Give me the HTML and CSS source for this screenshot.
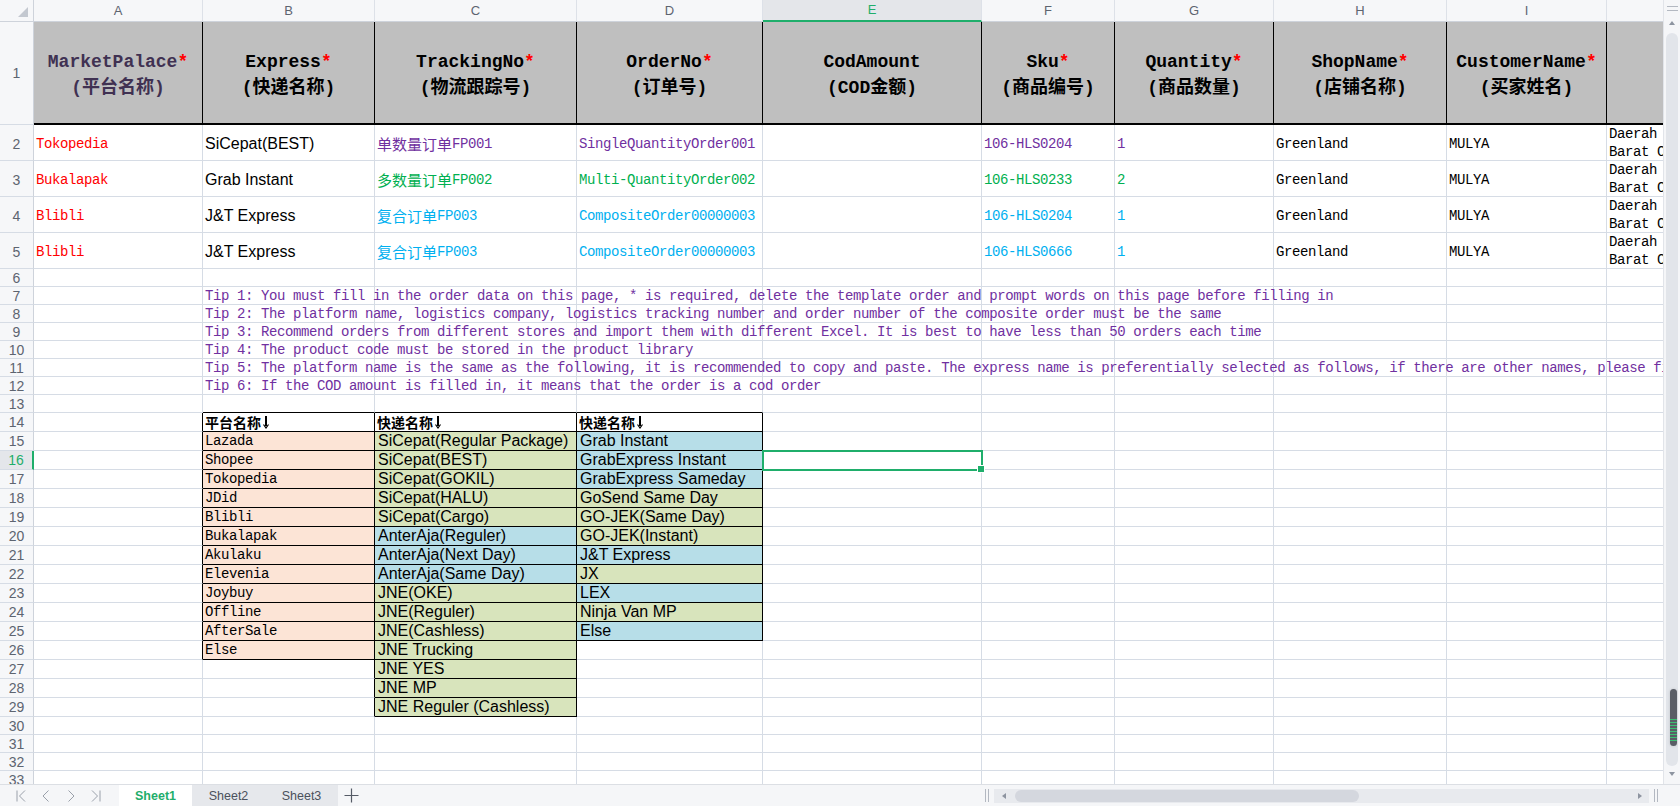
FILE: index.html
```html
<!DOCTYPE html>
<html lang="zh">
<head>
<meta charset="utf-8">
<title>Order import template</title>
<link rel="stylesheet" href="styles.css">
</head>
<body>
<div class="app">
  <div class="main">
    <div class="sheet">
      <div class="row colhdr">
        <div class="corner"><svg width="34" height="22" viewBox="0 0 34 22"><polygon points="28,7 28,17 18,17" fill="#C3C8D0"/></svg></div>
        <div>A</div><div>B</div><div>C</div><div>D</div><div class="on">E</div><div>F</div><div>G</div><div>H</div><div>I</div><div></div>
      </div>

      <div class="row r1">
        <div class="rh">1</div>
        <div class="th pd"><span>MarketPalace<em>*</em></span><span>(平台名称)</span></div>
        <div class="th"><span>Express<em>*</em></span><span>(快递名称)</span></div>
        <div class="th"><span>TrackingNo<em>*</em></span><span>(物流跟踪号)</span></div>
        <div class="th"><span>OrderNo<em>*</em></span><span>(订单号)</span></div>
        <div class="th"><span>CodAmount</span><span>(COD金额)</span></div>
        <div class="th"><span>Sku<em>*</em></span><span>(商品编号)</span></div>
        <div class="th"><span>Quantity<em>*</em></span><span>(商品数量)</span></div>
        <div class="th"><span>ShopName<em>*</em></span><span>(店铺名称)</span></div>
        <div class="th"><span>CustomerName<em>*</em></span><span>(买家姓名)</span></div>
        <div class="th"></div>
      </div>

      <div class="row r36">
        <div class="rh">2</div>
        <div class="red">Tokopedia</div>
        <div class="s">SiCepat(BEST)</div>
        <div class="pu"><span class="cj">单数量订单</span>FP001</div>
        <div class="pu">SingleQuantityOrder001</div>
        <div></div>
        <div class="pu">106-HLS0204</div>
        <div class="pu">1</div>
        <div>Greenland</div>
        <div>MULYA</div>
        <div class="wrap"><span>Daerah Khusus Ibukota Jakarta, Jakarta</span><span>Barat Cengkareng</span></div>
      </div>
      <div class="row r36">
        <div class="rh">3</div>
        <div class="red">Bukalapak</div>
        <div class="s">Grab Instant</div>
        <div class="gn"><span class="cj">多数量订单</span>FP002</div>
        <div class="gn">Multi-QuantityOrder002</div>
        <div></div>
        <div class="gn">106-HLS0233</div>
        <div class="gn">2</div>
        <div>Greenland</div>
        <div>MULYA</div>
        <div class="wrap"><span>Daerah Khusus Ibukota Jakarta, Jakarta</span><span>Barat Cengkareng</span></div>
      </div>
      <div class="row r36">
        <div class="rh">4</div>
        <div class="red">Blibli</div>
        <div class="s">J&amp;T Express</div>
        <div class="cy"><span class="cj">复合订单</span>FP003</div>
        <div class="cy">CompositeOrder00000003</div>
        <div></div>
        <div class="cy">106-HLS0204</div>
        <div class="cy">1</div>
        <div>Greenland</div>
        <div>MULYA</div>
        <div class="wrap"><span>Daerah Khusus Ibukota Jakarta, Jakarta</span><span>Barat Cengkareng</span></div>
      </div>
      <div class="row r36">
        <div class="rh">5</div>
        <div class="red">Blibli</div>
        <div class="s">J&amp;T Express</div>
        <div class="cy"><span class="cj">复合订单</span>FP003</div>
        <div class="cy">CompositeOrder00000003</div>
        <div></div>
        <div class="cy">106-HLS0666</div>
        <div class="cy">1</div>
        <div>Greenland</div>
        <div>MULYA</div>
        <div class="wrap"><span>Daerah Khusus Ibukota Jakarta, Jakarta</span><span>Barat Cengkareng</span></div>
      </div>

      <div class="row r18"><div class="rh">6</div><div></div><div></div><div></div><div></div><div></div><div></div><div></div><div></div><div></div><div></div></div>
      <div class="row r18"><div class="rh">7</div><div></div><div class="tip">Tip 1: You must fill in the order data on this page, * is required, delete the template order and prompt words on this page before filling in</div><div></div><div></div><div></div><div></div><div></div><div></div><div></div><div></div></div>
      <div class="row r18"><div class="rh">8</div><div></div><div class="tip">Tip 2: The platform name, logistics company, logistics tracking number and order number of the composite order must be the same</div><div></div><div></div><div></div><div></div><div></div><div></div><div></div><div></div></div>
      <div class="row r18"><div class="rh">9</div><div></div><div class="tip">Tip 3: Recommend orders from different stores and import them with different Excel. It is best to have less than 50 orders each time</div><div></div><div></div><div></div><div></div><div></div><div></div><div></div><div></div></div>
      <div class="row r18"><div class="rh">10</div><div></div><div class="tip">Tip 4: The product code must be stored in the product library</div><div></div><div></div><div></div><div></div><div></div><div></div><div></div><div></div></div>
      <div class="row r18"><div class="rh">11</div><div></div><div class="tip">Tip 5: The platform name is the same as the following, it is recommended to copy and paste. The express name is preferentially selected as follows, if there are other names, please fill in</div><div></div><div></div><div></div><div></div><div></div><div></div><div></div><div></div></div>
      <div class="row r18"><div class="rh">12</div><div></div><div class="tip">Tip 6: If the COD amount is filled in, it means that the order is a cod order</div><div></div><div></div><div></div><div></div><div></div><div></div><div></div><div></div></div>
      <div class="row r18"><div class="rh">13</div><div></div><div class="kb"></div><div class="kb"></div><div class="kb"></div><div></div><div></div><div></div><div></div><div></div><div></div></div>

      <div class="row r19"><div class="rh">14</div><div class="kr"></div>
        <div class="tb k">平台名称<svg class="arr" viewBox="0 0 8 14" width="8" height="14"><path d="M4 1v10" stroke="#000" stroke-width="2"/><path d="M1.5 9.5 4 13 6.5 9.5" fill="none" stroke="#000" stroke-width="1.2"/></svg></div>
        <div class="tb k">快递名称<svg class="arr" viewBox="0 0 8 14" width="8" height="14"><path d="M4 1v10" stroke="#000" stroke-width="2"/><path d="M1.5 9.5 4 13 6.5 9.5" fill="none" stroke="#000" stroke-width="1.2"/></svg></div>
        <div class="tb k">快递名称<svg class="arr" viewBox="0 0 8 14" width="8" height="14"><path d="M4 1v10" stroke="#000" stroke-width="2"/><path d="M1.5 9.5 4 13 6.5 9.5" fill="none" stroke="#000" stroke-width="1.2"/></svg></div>
        <div></div><div></div><div></div><div></div><div></div><div></div></div>
      <div class="row r19"><div class="rh">15</div><div class="kr"></div><div class="pe k">Lazada</div><div class="gr k s">SiCepat(Regular Package)</div><div class="bl k s">Grab Instant</div><div></div><div></div><div></div><div></div><div></div><div></div></div>
      <div class="row r19"><div class="rh on">16</div><div class="kr"></div><div class="pe k">Shopee</div><div class="gr k s">SiCepat(BEST)</div><div class="bl k s">GrabExpress Instant</div><div></div><div></div><div></div><div></div><div></div><div></div></div>
      <div class="row r19"><div class="rh">17</div><div class="kr"></div><div class="pe k">Tokopedia</div><div class="gr k s">SiCepat(GOKIL)</div><div class="bl k s">GrabExpress Sameday</div><div></div><div></div><div></div><div></div><div></div><div></div></div>
      <div class="row r19"><div class="rh">18</div><div class="kr"></div><div class="pe k">JDid</div><div class="gr k s">SiCepat(HALU)</div><div class="gr k s">GoSend Same Day</div><div></div><div></div><div></div><div></div><div></div><div></div></div>
      <div class="row r19"><div class="rh">19</div><div class="kr"></div><div class="pe k">Blibli</div><div class="gr k s">SiCepat(Cargo)</div><div class="gr k s">GO-JEK(Same Day)</div><div></div><div></div><div></div><div></div><div></div><div></div></div>
      <div class="row r19"><div class="rh">20</div><div class="kr"></div><div class="pe k">Bukalapak</div><div class="bl k s">AnterAja(Reguler)</div><div class="gr k s">GO-JEK(Instant)</div><div></div><div></div><div></div><div></div><div></div><div></div></div>
      <div class="row r19"><div class="rh">21</div><div class="kr"></div><div class="pe k">Akulaku</div><div class="bl k s">AnterAja(Next Day)</div><div class="bl k s">J&amp;T Express</div><div></div><div></div><div></div><div></div><div></div><div></div></div>
      <div class="row r19"><div class="rh">22</div><div class="kr"></div><div class="pe k">Elevenia</div><div class="bl k s">AnterAja(Same Day)</div><div class="gr k s">JX</div><div></div><div></div><div></div><div></div><div></div><div></div></div>
      <div class="row r19"><div class="rh">23</div><div class="kr"></div><div class="pe k">Joybuy</div><div class="gr k s">JNE(OKE)</div><div class="bl k s">LEX</div><div></div><div></div><div></div><div></div><div></div><div></div></div>
      <div class="row r19"><div class="rh">24</div><div class="kr"></div><div class="pe k">Offline</div><div class="gr k s">JNE(Reguler)</div><div class="gr k s">Ninja Van MP</div><div></div><div></div><div></div><div></div><div></div><div></div></div>
      <div class="row r19"><div class="rh">25</div><div class="kr"></div><div class="pe k">AfterSale</div><div class="gr k s">JNE(Cashless)</div><div class="bl k s">Else</div><div></div><div></div><div></div><div></div><div></div><div></div></div>
      <div class="row r19"><div class="rh">26</div><div class="kr"></div><div class="pe k">Else</div><div class="gr k s">JNE Trucking</div><div></div><div></div><div></div><div></div><div></div><div></div><div></div></div>
      <div class="row r19"><div class="rh">27</div><div></div><div class="kr"></div><div class="gr k s">JNE YES</div><div></div><div></div><div></div><div></div><div></div><div></div><div></div></div>
      <div class="row r19"><div class="rh">28</div><div></div><div class="kr"></div><div class="gr k s">JNE MP</div><div></div><div></div><div></div><div></div><div></div><div></div><div></div></div>
      <div class="row r19"><div class="rh">29</div><div></div><div class="kr"></div><div class="gr k s">JNE Reguler (Cashless)</div><div></div><div></div><div></div><div></div><div></div><div></div><div></div></div>

      <div class="row r18"><div class="rh">30</div><div></div><div></div><div></div><div></div><div></div><div></div><div></div><div></div><div></div><div></div></div>
      <div class="row r18"><div class="rh">31</div><div></div><div></div><div></div><div></div><div></div><div></div><div></div><div></div><div></div><div></div></div>
      <div class="row r18"><div class="rh">32</div><div></div><div></div><div></div><div></div><div></div><div></div><div></div><div></div><div></div><div></div></div>
      <div class="row r18"><div class="rh">33</div><div></div><div></div><div></div><div></div><div></div><div></div><div></div><div></div><div></div><div></div></div>

      <div class="selbox"></div>
    </div>

    <div class="vscroll">
      <div class="vgrip"></div>
      <div class="tri-up"></div>
      <div class="vtrack"><div class="vthumb"></div></div>
      <div class="tri-down"></div>
    </div>
  </div>

  <div class="tabbar">
    <div class="nav">
      <svg width="10" height="12" viewBox="0 0 10 12"><path d="M1 0.5v11M9 0.5 3.5 6 9 11.5" fill="none" stroke="#9AA0AA" stroke-width="1"/></svg>
      <svg width="10" height="12" viewBox="0 0 10 12"><path d="M7.5 0.5 2 6 7.5 11.5" fill="none" stroke="#9AA0AA" stroke-width="1"/></svg>
      <svg width="10" height="12" viewBox="0 0 10 12"><path d="M2.5 0.5 8 6 2.5 11.5" fill="none" stroke="#9AA0AA" stroke-width="1"/></svg>
      <svg width="10" height="12" viewBox="0 0 10 12"><path d="M9 0.5v11M1 0.5 6.5 6 1 11.5" fill="none" stroke="#9AA0AA" stroke-width="1"/></svg>
    </div>
    <div class="tab act">Sheet1</div>
    <div class="tab">Sheet2</div>
    <div class="tab">Sheet3</div>
    <div class="add"><svg width="15" height="15" viewBox="0 0 15 15"><path d="M7.5 0.5v14M0.5 7.5h14" stroke="#555B66" stroke-width="1.2"/></svg></div>
    <div class="hs">
      <span class="hgrip"></span>
      <div class="htrack"><span class="tri-l"></span><div class="hthumb"></div><span class="tri-r"></span></div>
      <span class="hgrip"></span>
    </div>
  </div>
</div>
</body>
</html>
```

FILE: styles.css
```css
* { box-sizing: border-box; margin: 0; padding: 0; }
html, body { margin: 0; background: #fff; }
body { width: 1680px; height: 806px; overflow: hidden; font-family: "Liberation Sans", Arial, sans-serif; }

.app { display: flex; flex-direction: column; width: 1680px; height: 806px; }
.main { display: flex; height: 784px; }
.sheet { position: relative; width: 1663px; height: 784px; overflow: hidden; }

.row {
  display: grid;
  grid-template-columns: 34px 169px 172px 202px 186px 219px 133px 159px 173px 160px 220px;
  grid-template-rows: 100%;
}
.row > div {
  display: flex;
  align-items: center;
  min-width: 0;
  white-space: nowrap;
  padding-left: 2px;
  border-right: 1px solid #D6DCE5;
  border-bottom: 1px solid #D6DCE5;
  font: 14px/18px "Liberation Mono", "Noto Sans CJK SC", monospace;
  letter-spacing: -0.4px;
  color: #000;
}
.colhdr { height: 22px; }
.r1 { height: 103px; }
.r36 { height: 36px; }
.r18 { height: 18px; }
.r19 { height: 19px; }
.r36 > div { padding-top: 3px; }
.r36 > div.wrap { padding-top: 0; }

/* headers */
.colhdr > div {
  justify-content: center;
  padding: 0;
  background: #F6F7F9;
  color: #5D6470;
  font: 13px/16px "Liberation Sans", Arial, sans-serif;
  letter-spacing: 0;
  border-right-color: #DDE1E8;
  border-bottom-color: #CED3DB;
}
.colhdr > div.corner { display: block; border-right-color: #CED3DB; }
.corner svg { display: block; }
.colhdr > div.on { background: #E4E6EA; color: #1FAE6B; border-bottom: 2px solid #1FAE6B; }

.row > div.rh {
  justify-content: center;
  padding-left: 0;
  background: #F6F7F9;
  color: #5D6470;
  font: 14px/16px "Liberation Sans", Arial, sans-serif;
  letter-spacing: 0;
  border-right-color: #CED3DB;
}
.row > div.rh.on { background: #E4E6EA; color: #1FAE6B; border-right: 2px solid #1FAE6B; }

/* row 1 titles */
.r1 > div.th {
  flex-direction: column;
  justify-content: center;
  align-items: center;
  padding: 5px 0 0;
  background: #BFBFBF;
  border-right-color: #000;
  border-bottom: 2px solid #000;
  font: bold 18px/26px "Liberation Mono", "Noto Sans CJK SC", monospace;
  letter-spacing: 0;
}
.r1 > div.pd { color: #403152; }
em { font-style: normal; color: #FF0000; }

/* data */
.row > div.s { font: 16px/18px "Liberation Sans", Arial, sans-serif; letter-spacing: 0; }
.row > div.red { color: #FF0000; }
.row > div.pu { color: #7030A0; }
.row > div.gn { color: #00B050; }
.row > div.cy { color: #00B0F0; }
.cj { font-family: "Noto Sans CJK SC", sans-serif; font-size: 15px; letter-spacing: 0; }
.row > div.wrap { flex-direction: column; align-items: flex-start; justify-content: center; overflow: hidden; }

.row > div.tip { color: #7030A0; overflow: visible; position: relative; z-index: 1; }

/* lookup table */
.row > div.kr { border-right-color: #000; }
.row > div.kb { border-bottom-color: #000; }
.row > div.k { border-right-color: #000; border-bottom-color: #000; }
.row > div.tb {
  background: #fff;
  font: bold 14px/18px "Noto Sans CJK SC", sans-serif;
  letter-spacing: 0;
  gap: 1px;
}
.arr { display: block; }
.row > div.pe { background: #FCE4D6; }
.row > div.gr { background: #D8E4BC; }
.row > div.bl { background: #B7DEE8; }
.row > div.gr.s, .row > div.bl.s { padding-left: 3px; }

/* active cell */
.selbox {
  position: absolute;
  left: 762px;
  top: 450px;
  width: 221px;
  height: 21px;
  border: 2px solid #1FAE6B;
  z-index: 2;
}
.selbox::after {
  content: "";
  position: absolute;
  right: -4px;
  bottom: -4px;
  width: 6px;
  height: 6px;
  background: #1FAE6B;
  border: 1px solid #fff;
}

/* vertical scrollbar */
.vscroll {
  width: 17px;
  height: 784px;
  background: #F5F6F8;
  border-left: 1px solid #E1E4E9;
  display: flex;
  flex-direction: column;
  align-items: center;
}
.vgrip { width: 11px; height: 5px; margin-top: 6px; border-top: 1px solid #B3B8C1; border-bottom: 1px solid #B3B8C1; }
.tri-up { margin-top: 10px; width: 0; height: 0; border-left: 3px solid transparent; border-right: 3px solid transparent; border-bottom: 4px solid #8D94A0; }
.tri-down { margin: 0 0 8px; width: 0; height: 0; border-left: 3px solid transparent; border-right: 3px solid transparent; border-top: 4px solid #8D94A0; }
.vtrack { position: relative; flex: 1; width: 12px; margin: 8px 0 6px; background: #E2E5EA; border-radius: 6px; }
.vthumb {
  position: absolute;
  left: 4px;
  top: 656px;
  width: 7px;
  height: 57px;
  border-radius: 4px;
  background:
    repeating-linear-gradient(to bottom, transparent 0 2px, #3DBE72 2px 3px) 0 28px / 100% 26px no-repeat,
    #5A5E66;
  box-shadow: 0 0 3px rgba(0,0,0,0.15);
}

/* tab bar */
.tabbar {
  display: flex;
  align-items: stretch;
  height: 22px;
  background: #F5F6F8;
  border-top: 1px solid #DCDFE4;
}
.nav { display: flex; align-items: center; gap: 15px; width: 119px; padding-left: 16px; }
.nav svg { display: block; }
.tab {
  display: flex;
  align-items: center;
  justify-content: center;
  width: 73px;
  background: #E6E8EC;
  color: #4B515C;
  font: 12.5px "Liberation Sans", Arial, sans-serif;
}
.tab.act { background: #fff; color: #1FAE6B; font-weight: bold; }
.add { display: flex; align-items: center; justify-content: center; width: 26px; }
.add svg { display: block; }
.hs { margin-left: auto; display: flex; align-items: center; gap: 5px; padding-right: 22px; }
.hgrip { display: block; width: 4px; height: 13px; border-left: 1px solid #B3B8C1; border-right: 1px solid #B3B8C1; }
.htrack { display: flex; align-items: center; width: 655px; height: 14px; background: #E8EAEE; padding-left: 8px; }
.tri-l { width: 0; height: 0; border-top: 3px solid transparent; border-bottom: 3px solid transparent; border-right: 4px solid #8D94A0; }
.tri-r { margin-left: auto; margin-right: 7px; width: 0; height: 0; border-top: 3px solid transparent; border-bottom: 3px solid transparent; border-left: 4px solid #8D94A0; }
.hthumb { margin-left: 9px; width: 344px; height: 12px; border-radius: 6px; background: #D4D7DE; }
```
